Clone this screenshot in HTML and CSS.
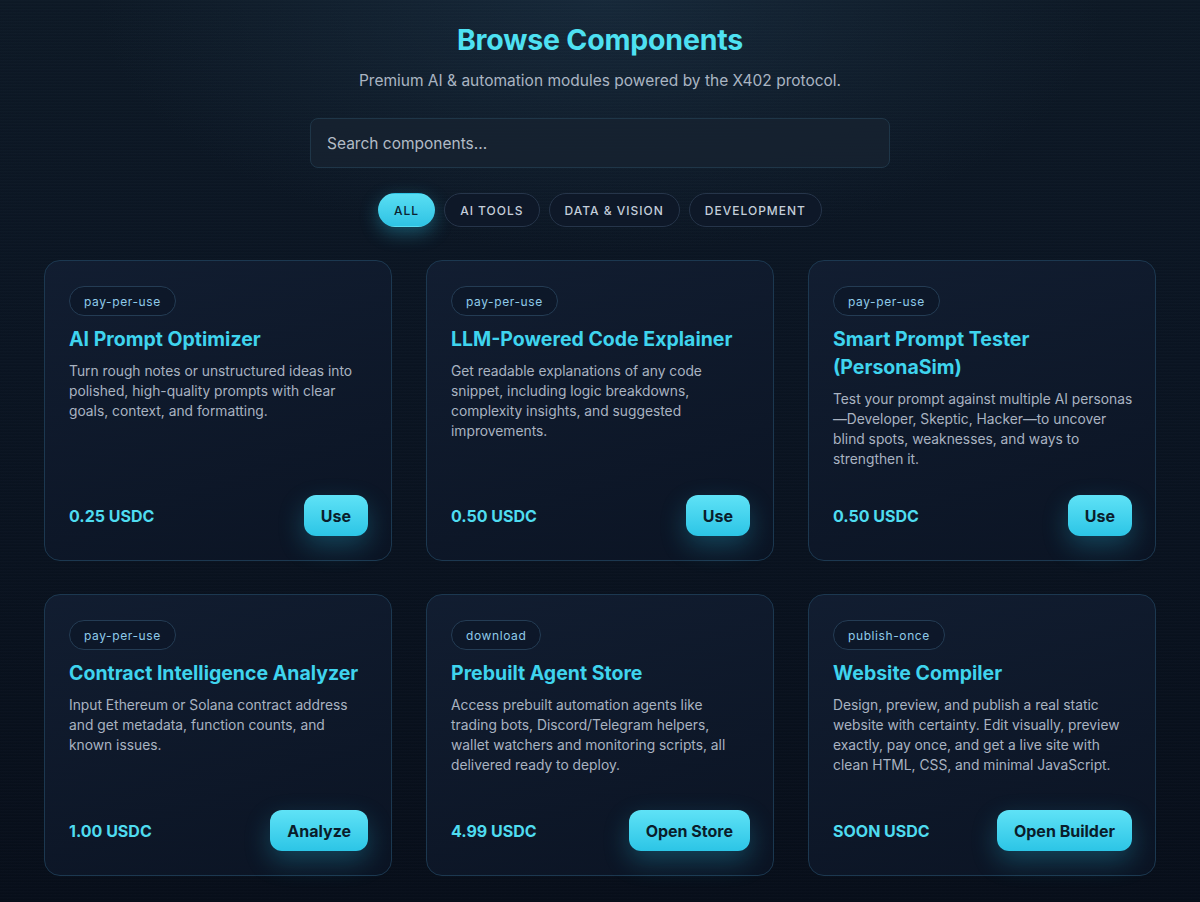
FILE: index.html
```html
<!DOCTYPE html>
<html lang="en">
<head>
<meta charset="utf-8">
<title>Browse Components</title>
<link rel="stylesheet" href="styles.css">
</head>
<body>
<main class="page">
  <header class="hero">
    <h1 class="hero-title">Browse Components</h1>
    <p class="hero-sub">Premium AI &amp; automation modules powered by the X402 protocol.</p>
    <input class="search" type="text" placeholder="Search components...">
    <nav class="filters">
      <button class="pill pill-active">ALL</button>
      <button class="pill">AI TOOLS</button>
      <button class="pill">DATA &amp; VISION</button>
      <button class="pill">DEVELOPMENT</button>
    </nav>
  </header>

  <section class="grid">
    <article class="card">
      <span class="tag">pay-per-use</span>
      <h2 class="card-title">AI Prompt Optimizer</h2>
      <p class="card-desc">Turn rough notes or unstructured ideas into polished, high-quality prompts with clear goals, context, and formatting.</p>
      <div class="card-foot"><span class="price">0.25 USDC</span><button class="btn">Use</button></div>
    </article>
    <article class="card">
      <span class="tag">pay-per-use</span>
      <h2 class="card-title">LLM-Powered Code Explainer</h2>
      <p class="card-desc">Get readable explanations of any code snippet, including logic breakdowns, complexity insights, and suggested improvements.</p>
      <div class="card-foot"><span class="price">0.50 USDC</span><button class="btn">Use</button></div>
    </article>
    <article class="card">
      <span class="tag">pay-per-use</span>
      <h2 class="card-title">Smart Prompt Tester (PersonaSim)</h2>
      <p class="card-desc">Test your prompt against multiple AI personas—Developer, Skeptic, Hacker—to uncover blind spots, weaknesses, and ways to strengthen it.</p>
      <div class="card-foot"><span class="price">0.50 USDC</span><button class="btn">Use</button></div>
    </article>
    <article class="card">
      <span class="tag">pay-per-use</span>
      <h2 class="card-title">Contract Intelligence Analyzer</h2>
      <p class="card-desc">Input Ethereum or Solana contract address and get metadata, function counts, and known issues.</p>
      <div class="card-foot"><span class="price">1.00 USDC</span><button class="btn">Analyze</button></div>
    </article>
    <article class="card">
      <span class="tag">download</span>
      <h2 class="card-title">Prebuilt Agent Store</h2>
      <p class="card-desc">Access prebuilt automation agents like trading bots, Discord/Telegram helpers, wallet watchers and monitoring scripts, all delivered ready to deploy.</p>
      <div class="card-foot"><span class="price">4.99 USDC</span><button class="btn">Open Store</button></div>
    </article>
    <article class="card">
      <span class="tag">publish-once</span>
      <h2 class="card-title">Website Compiler</h2>
      <p class="card-desc">Design, preview, and publish a real static website with certainty. Edit visually, preview exactly, pay once, and get a live site with clean HTML, CSS, and minimal JavaScript.</p>
      <div class="card-foot"><span class="price">SOON USDC</span><button class="btn">Open Builder</button></div>
    </article>
  </section>
</main>
</body>
</html>
```
FILE: styles.css
```css
* { box-sizing: border-box; }
html, body { margin: 0; padding: 0; }
body {
  min-height: 902px;
  font-family: Inter, "Noto Sans", "Liberation Sans", sans-serif;
  color: #c9d3de;
  background-color: #08111d;
  background-image:
    repeating-linear-gradient(180deg, rgba(255,255,255,0.012) 0px, rgba(255,255,255,0.012) 1px, rgba(0,0,0,0.05) 2px, rgba(0,0,0,0) 3px),
    radial-gradient(ellipse 60% 40% at 50% 0%, rgba(40,70,95,0.35), rgba(0,0,0,0) 70%),
    linear-gradient(180deg, #0d1926 0%, #0a1422 40%, #070e1a 100%);
  overflow: hidden;
}
.page {
  width: 1112px;
  margin: 0 auto;
  padding-top: 22px;
}
.hero {
  display: flex;
  flex-direction: column;
  align-items: center;
}
.hero-title {
  margin: 0;
  font-size: 28.5px;
  line-height: 36px;
  font-weight: 700;
  color: #4ee1f2;
  letter-spacing: -0.2px;
}
.hero-sub {
  margin: 11px 0 0;
  font-size: 15.5px;
  line-height: 24px;
  color: #aab5c2;
}
.search {
  margin-top: 25px;
  width: 580px;
  height: 50px;
  padding: 0 16px;
  border-radius: 8px;
  border: 1px solid #1f3648;
  background: rgba(22,34,48,0.85);
  font-family: inherit;
  font-size: 15.5px;
  color: #c9d3de;
  outline: none;
}
.search::placeholder { color: #b2bbc6; }
.filters {
  margin-top: 25px;
  display: flex;
  gap: 9px;
}
.pill {
  height: 34px;
  padding: 0 15px;
  border-radius: 17px;
  border: 1px solid #26354a;
  background: #0e1828;
  color: #c4ceda;
  font-family: inherit;
  font-size: 12px;
  font-weight: 500;
  letter-spacing: 1px;
}
.pill-active {
  border-color: transparent;
  background: linear-gradient(180deg, #59def3, #2fc3e4);
  color: #0b2231;
  box-shadow: 0 6px 18px rgba(45,195,230,0.35);
}
.grid {
  margin-top: 33px;
  display: grid;
  grid-template-columns: repeat(3, 1fr);
  column-gap: 34px;
  row-gap: 33px;
}
.card {
  min-height: 282px;
  display: flex;
  flex-direction: column;
  align-items: flex-start;
  padding: 25px 22px 24px 24px;
  border-radius: 16px;
  border: 1px solid #1c3850;
  background: linear-gradient(160deg, rgba(18,30,50,0.92), rgba(11,20,36,0.92));
}
.tag {
  height: 30px;
  display: inline-flex;
  align-items: center;
  padding: 0 14px;
  border-radius: 15px;
  border: 1px solid #243c54;
  background: rgba(12,22,38,0.6);
  font-size: 12px;
  letter-spacing: 0.6px;
  color: #8fcbe9;
}
.card-title {
  margin: 9px 0 0;
  font-size: 19.5px;
  line-height: 28px;
  font-weight: 700;
  color: #3fd4ee;
}
.card-desc {
  margin: 8px 0 0;
  font-size: 13.8px;
  line-height: 20px;
  color: #a9b3c1;
}
.card-foot {
  margin-top: auto;
  padding-top: 26px;
  padding-right: 1px;
  width: 100%;
  display: flex;
  justify-content: space-between;
  align-items: center;
}
.price {
  font-size: 16px;
  font-weight: 700;
  color: #4fdcf0;
}
.btn {
  height: 41px;
  padding: 0 17px;
  border: none;
  border-radius: 12px;
  background: linear-gradient(180deg, #5fe2f6, #2cc5e6);
  color: #0a1d2b;
  font-family: inherit;
  font-size: 16px;
  font-weight: 700;
  box-shadow: 0 10px 26px rgba(40,190,225,0.28);
}
```
